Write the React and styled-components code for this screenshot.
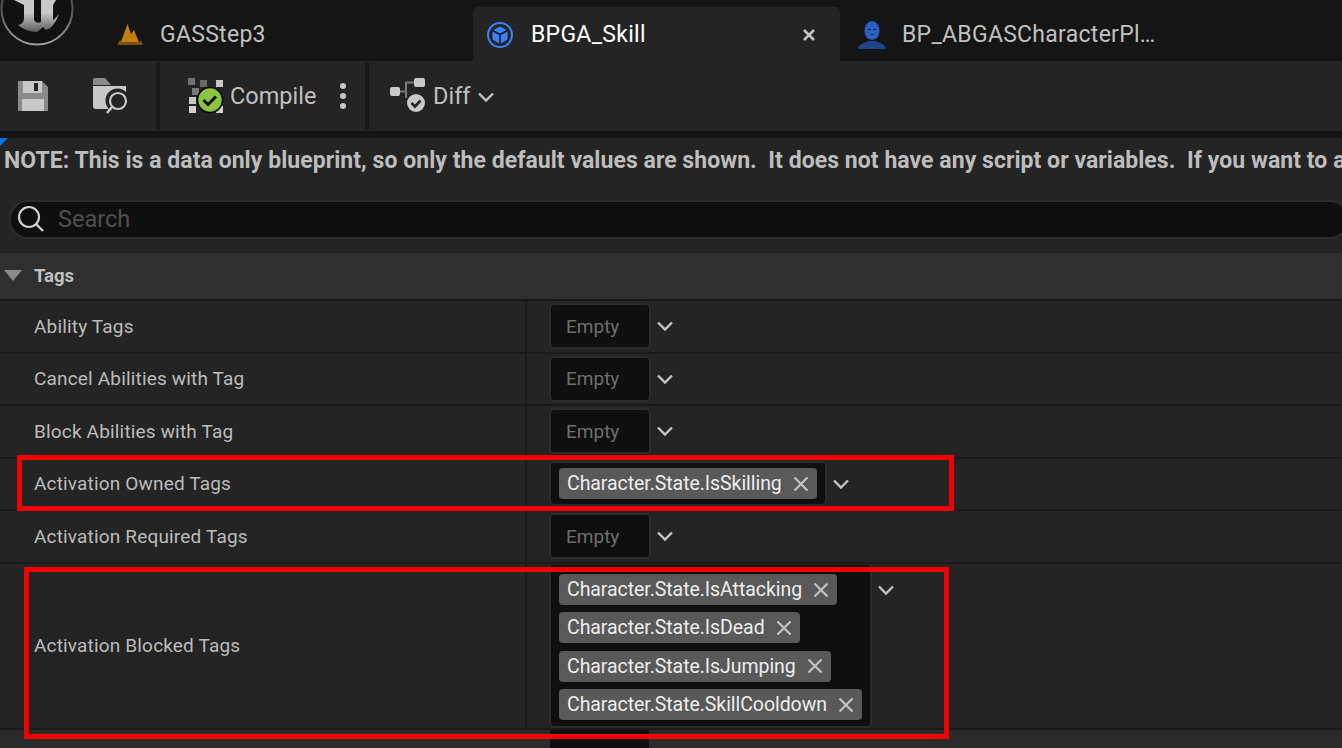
import React from "react";
import styled, { createGlobalStyle } from "styled-components";

const Global = createGlobalStyle`
  html, body { margin: 0; padding: 0; background: #242424; }
  body { width: 1342px; height: 748px; overflow: hidden; font-family: Roboto, "Liberation Sans", sans-serif; }
  * { box-sizing: border-box; }
`;

const Page = styled.div`
  position: relative;
  width: 1342px;
  height: 748px;
  overflow: hidden;
  background: #242424;
`;

const TabStrip = styled.div`
  height: 61px;
  background: #151515;
  display: flex;
  align-items: flex-end;
`;
const LogoSlot = styled.div`
  width: 113px;
  height: 61px;
  flex: none;
  position: relative;
`;
const LogoSvg = styled.svg`
  position: absolute;
  left: 0;
  top: -28px;
  width: 74px;
  height: 74px;
`;
const Tab = styled.div`
  flex: none;
  width: ${p => p.$w}px;
  height: 54px;
  display: flex;
  align-items: center;
  padding-left: ${p => p.$pad}px;
  padding-top: 1px;
  border-radius: 5px 5px 0 0;
  background: ${p => (p.$active ? "#242424" : "transparent")};
  color: ${p => (p.$active ? "#fff" : "#c0c0c0")};
  font-size: 23px;
  white-space: nowrap;
  letter-spacing: 0.28px;
`;
const TabLabel = styled.span`
  margin-left: ${p => p.$gap}px;
  flex: ${p => (p.$grow ? 1 : "none")};
`;

const Toolbar = styled.div`
  height: 70px;
  display: flex;
  align-items: center;
  background: #242424;
`;
const ToolGroup = styled.div`
  height: 100%;
  width: ${p => p.$w}px;
  flex: none;
  display: flex;
  align-items: center;
  padding-left: ${p => p.$pad}px;
`;
const ToolSep = styled.div`
  width: 4px;
  height: 66px;
  background: #181818;
  flex: none;
`;
const ToolLabel = styled.span`
  color: #c0c0c0;
  font-size: 23.5px;
  margin-left: ${p => p.$ml || 0}px;
`;
const Spacer = styled.span`
  flex: none;
  width: ${p => p.$w}px;
`;
const DarkBar = styled.div`
  height: 7px;
  background: #151515;
`;

const Panel = styled.div`
  position: relative;
  background: #242424;
  height: 610px;
`;
const Corner = styled.div`
  position: absolute;
  left: 0;
  top: 0;
  width: 0;
  height: 0;
  border-top: 8px solid #0a70e0;
  border-right: 8px solid transparent;
`;
const Note = styled.div`
  padding: 9px 0 0 4px;
  height: 62px;
  font-weight: 700;
  font-size: 23px;
  line-height: 28px;
  color: #bdbdbd;
  white-space: pre;
  letter-spacing: 0.05px;
`;
const SearchBar = styled.div`
  margin-left: 9px;
  width: 1340px;
  height: 39px;
  border-radius: 19px;
  background: #0f0f0f;
  border: 2px solid #2c2c2c;
  display: flex;
  align-items: center;
  padding: 0 0 1px 6px;
  gap: 13px;
  color: #4f4f4f;
  font-size: 23.5px;
`;
const Section = styled.div`
  margin-top: 14px;
  height: 48px;
  background: #2f2f2f;
  border-bottom: 2px solid #181818;
  display: flex;
  align-items: center;
  padding-left: 4px;
  gap: 12px;
  font-weight: 700;
  font-size: 18.5px;
  color: #c0c0c0;
`;
const Row = styled.div`
  display: grid;
  grid-template-columns: 525px 2px 1fr;
  height: ${p => p.$h}px;
  border-bottom: 2px solid #1a1a1a;
`;
const Name = styled.div`
  display: flex;
  align-items: center;
  padding-left: 34px;
  color: #bcbcbc;
  font-size: 19px;
  letter-spacing: 0.17px;
`;
const ColLine = styled.div`
  background: #1a1a1a;
`;
const Value = styled.div`
  padding-left: 22px;
  display: flex;
  align-items: ${p => (p.$top ? "flex-start" : "center")};
`;
const TagBox = styled.div`
  border-radius: 5px;
  background: #0f0f0f;
  border: 2px solid #2c2c2c;
  display: flex;
  flex-direction: ${p => (p.$col ? "column" : "row")};
  align-items: flex-start;
  gap: 7.4px;
  padding: ${p => (p.$empty ? "0 15px" : "5px 8px 5px 8px")};
  color: #6e6e6e;
  font-size: 19px;
  height: ${p => (p.$empty ? "46px" : "auto")};
  ${p => p.$empty && "width: 102px; align-items: center;"}
  ${p => p.$col && "height: 163px; margin-top: 1px; padding-top: 9.5px; border-top: 0; border-radius: 0 0 5px 5px;"}
`;
const Tag = styled.div`
  height: 31px;
  background: #595959;
  border-radius: 4px;
  display: flex;
  align-items: center;
  padding: 0 8px 0 8px;
  color: #ededed;
  font-size: 19.5px;
  letter-spacing: -0.06px;
  gap: 11px;
  white-space: nowrap;
`;
const ChevronBox = styled.span`
  margin-left: ${p => p.$ml || 5}px;
  display: inline-flex;
  margin-top: ${p => p.$mt || 0}px;
`;
const Mark = styled.div`
  position: absolute;
  border: 5px solid #f00000;
  left: ${p => p.$x}px;
  top: ${p => p.$y}px;
  width: ${p => p.$w}px;
  height: ${p => p.$h}px;
  pointer-events: none;
`;
const TailBox = styled.div`
  height: 18px;
  background: #2a2a2a;
  padding-left: 550px;
`;
const TailInner = styled.div`
  width: 99px;
  height: 18px;
  background: #0f0f0f;
`;

const Chevron = ({ size = 18, color = "#c4c4c4" }) => (
  <svg width={size} height={size * 0.67} viewBox="0 0 18 12" fill="none">
    <path d="M2 2.5 L9 9.5 L16 2.5" stroke={color} strokeWidth="2.4" />
  </svg>
);
const XIcon = () => (
  <svg width="16" height="16" viewBox="0 0 16 16" fill="none">
    <path d="M1.5 1.5 L14.5 14.5 M14.5 1.5 L1.5 14.5" stroke="#c2c2c2" strokeWidth="2.2" />
  </svg>
);

const Logo = () => (
  <LogoSvg viewBox="0 0 74 74">
    <defs>
      <linearGradient id="ug" x1="0" y1="0" x2="0" y2="1">
        <stop offset="0.4" stopColor="#c8c8c8" />
        <stop offset="1" stopColor="#5c5c5c" />
      </linearGradient>
      <linearGradient id="ur" x1="0" y1="0" x2="0" y2="1">
        <stop offset="0.5" stopColor="#555" />
        <stop offset="1" stopColor="#a0a0a0" />
      </linearGradient>
    </defs>
    <circle cx="37" cy="37" r="35.5" fill="#111" stroke="url(#ur)" strokeWidth="2" />
    <path d="M14 28 L34 28 L34 48 Q36 52 41 50 L41 28 L56 28 L53 33 L53 48 Q55 47 59 42 Q54 56 46 58 L43 55 L37 60 Q26 60 18 53 Q24 52 24 46 L24 33 Z" fill="url(#ug)" />
  </LogoSvg>
);

const LevelIcon = () => (
  <svg width="28" height="24" viewBox="0 0 28 24">
    <path d="M1 22 L4 17 L6 19 L24 19 L25 17 L27 22 Z" fill="#7a4f10" />
    <path d="M5 19 L11.5 1 L15 11 L18 7 L23 19 Z" fill="#c07f10" />
  </svg>
);
const BpIcon = () => (
  <svg width="28" height="28" viewBox="0 0 28 28" fill="none">
    <circle cx="14" cy="14" r="12" stroke="#3b82f6" strokeWidth="2" />
    <path d="M14 5.5 L21.5 9.5 L21.5 18.5 L14 23 L6.5 18.5 L6.5 9.5 Z" fill="#3b82f6" />
    <path d="M6.5 9.5 L14 13.5 L21.5 9.5 M14 13.5 L14 23" stroke="#151a26" strokeWidth="1.6" />
  </svg>
);
const PersonIcon = () => (
  <svg width="30" height="30" viewBox="0 0 30 30">
    <path d="M1 29 C2 24 8 22.5 12 21 L18 21 C22 22.5 28 24 29 29 Z" fill="#1f4488" />
    <ellipse cx="15" cy="10.5" rx="7.5" ry="9.5" fill="#2d5fc4" />
    <path d="M11 9.5h3M16 9.5h3M13.5 14.5h3" stroke="#12264a" strokeWidth="1.1" />
  </svg>
);
const SaveIcon = () => (
  <svg width="32" height="32" viewBox="0 0 32 32">
    <path d="M1 1 H25 L31 7 V31 H1 Z" fill="#8a8a8a" />
    <rect x="6" y="1" width="19" height="12" fill="#c8c8c8" />
    <rect x="17" y="3" width="4" height="8" fill="#242424" />
    <rect x="5" y="19" width="22" height="12" fill="#c8c8c8" />
  </svg>
);
const FolderIcon = () => (
  <svg width="36" height="36" viewBox="0 0 36 36" fill="none">
    <path d="M0 2 Q0 0 2 0 H12 L18 7 H0 Z" fill="#8a8a8a" />
    <path d="M0 8 H33 V14 A11 11 0 0 0 16 31 H3 A3 3 0 0 1 0 28 Z" fill="#c8c8c8" />
    <circle cx="25" cy="23" r="8" stroke="#c8c8c8" strokeWidth="2.2" />
    <path d="M19 29 L14 35" stroke="#c8c8c8" strokeWidth="2.6" />
  </svg>
);
const squares = [
  [0, 0, "#707070"], [12, 2, "#6a6a6a"], [28, 2, "#c8c8c8"], [4, 10, "#7a7a7a"], [1, 19, "#c8c8c8"],
  [1, 28, "#d0d0d0"], [28, 19, "#c8c8c8"], [28, 28, "#d0d0d0"], [19, 28, "#c8c8c8"],
];
const CompileIcon = () => (
  <svg width="36" height="36" viewBox="0 0 36 36">
    {squares.map(([x, y, c], i) => <rect key={i} x={x} y={y} width="7" height="7" fill={c} />)}
    <circle cx="22" cy="22" r="12.5" fill="#8cc63f" stroke="#0a0a0a" strokeWidth="1.6" />
    <path d="M15.5 22 L20 26.5 L28 18.5" stroke="#0a0a0a" strokeWidth="3" fill="none" />
  </svg>
);
const DiffIcon = () => (
  <svg width="36" height="36" viewBox="0 0 36 36" fill="none">
    <rect x="0" y="9" width="10" height="9" rx="2" fill="#c8c8c8" />
    <rect x="24" y="0" width="11" height="9" rx="2" fill="#c8c8c8" />
    <path d="M10 13.5 H16 V4.5 H24 M16 13.5 V20" stroke="#7a7a7a" strokeWidth="2" />
    <circle cx="26" cy="25" r="9" fill="#c8c8c8" />
    <path d="M21.5 25 L25 28.5 L30.5 22.5" stroke="#242424" strokeWidth="2.6" />
  </svg>
);
const Kebab = () => (
  <svg width="8" height="28" viewBox="0 0 8 28"><circle cx="4" cy="4" r="3" fill="#c8c8c8" /><circle cx="4" cy="14" r="3" fill="#c8c8c8" /><circle cx="4" cy="24" r="3" fill="#c8c8c8" /></svg>
);
const SearchIcon = () => (
  <svg width="28" height="28" viewBox="0 0 28 28" fill="none">
    <circle cx="12" cy="12" r="10" stroke="#d0d0d0" strokeWidth="2.2" />
    <path d="M19 19 L26 26" stroke="#d0d0d0" strokeWidth="2.4" />
  </svg>
);
const TabCloseIcon = styled.svg`
  margin-right: 24px;
`;
const TabClose = () => (
  <TabCloseIcon width="14" height="14" viewBox="0 0 14 14">
    <path d="M2 2 L12 12 M12 2 L2 12" stroke="#c4c4c4" strokeWidth="2.6" />
  </TabCloseIcon>
);
const Caret = () => (
  <svg width="18" height="12" viewBox="0 0 18 12"><path d="M0 0 H18 L9 11 Z" fill="#8a8a8a" /></svg>
);

const emptyRows = ["Ability Tags", "Cancel Abilities with Tag", "Block Abilities with Tag"];
const blocked = ["Character.State.IsAttacking", "Character.State.IsDead", "Character.State.IsJumping", "Character.State.SkillCooldown"];

const TagChip = ({ text }) => (
  <Tag>{text}<XIcon /></Tag>
);

const EmptyRow = ({ name }) => (
  <Row $h={52.5}>
    <Name>{name}</Name>
    <ColLine />
    <Value>
      <TagBox $empty>Empty</TagBox>
      <ChevronBox><Chevron /></ChevronBox>
    </Value>
  </Row>
);

export default function App() {
  return (
    <Page>
      <Global />
      <TabStrip>
        <LogoSlot><Logo /></LogoSlot>
        <Tab $w={360} $pad={3}>
          <LevelIcon />
          <TabLabel $gap={16}>GASStep3</TabLabel>
        </Tab>
        <Tab $w={367} $pad={13} $active>
          <BpIcon />
          <TabLabel $gap={17} $grow>BPGA_Skill</TabLabel>
          <TabClose />
        </Tab>
        <Tab $w={400} $pad={17}>
          <PersonIcon />
          <TabLabel $gap={15}>BP_ABGASCharacterPl…</TabLabel>
        </Tab>
      </TabStrip>
      <Toolbar>
        <ToolGroup $w={156} $pad={17}>
          <SaveIcon />
          <Spacer $w={44} />
          <FolderIcon />
        </ToolGroup>
        <ToolSep />
        <ToolGroup $w={205} $pad={28}>
          <CompileIcon />
          <ToolLabel $ml={6}>Compile</ToolLabel>
          <Spacer $w={23} />
          <Kebab />
        </ToolGroup>
        <ToolSep />
        <ToolGroup $w={200} $pad={21}>
          <DiffIcon />
          <ToolLabel $ml={7}>Diff</ToolLabel>
          <ChevronBox $mt={2} $ml={7}><Chevron /></ChevronBox>
        </ToolGroup>
      </Toolbar>
      <DarkBar />
      <Panel>
        <Corner />
        <Note>{"NOTE: This is a data only blueprint, so only the default values are shown.  It does not have any script or variables.  If you want to a"}</Note>
        <SearchBar><SearchIcon />Search</SearchBar>
        <Section><Caret />Tags</Section>
        {emptyRows.map(n => <EmptyRow key={n} name={n} />)}
        <Row $h={52.5}>
          <Name>Activation Owned Tags</Name>
          <ColLine />
          <Value>
            <TagBox><TagChip text="Character.State.IsSkilling" /></TagBox>
            <ChevronBox><Chevron /></ChevronBox>
          </Value>
        </Row>
        <EmptyRow name="Activation Required Tags" />
        <Row $h={166.5}>
          <Name>Activation Blocked Tags</Name>
          <ColLine />
          <Value $top>
            <TagBox $col>{blocked.map(t => <TagChip key={t} text={t} />)}</TagBox>
            <ChevronBox $mt={20}><Chevron /></ChevronBox>
          </Value>
        </Row>
        <TailBox><TailInner /></TailBox>
      </Panel>
      <Mark $x={17} $y={455} $w={937} $h={56} />
      <Mark $x={24} $y={567} $w={925} $h={172} />
    </Page>
  );
}
